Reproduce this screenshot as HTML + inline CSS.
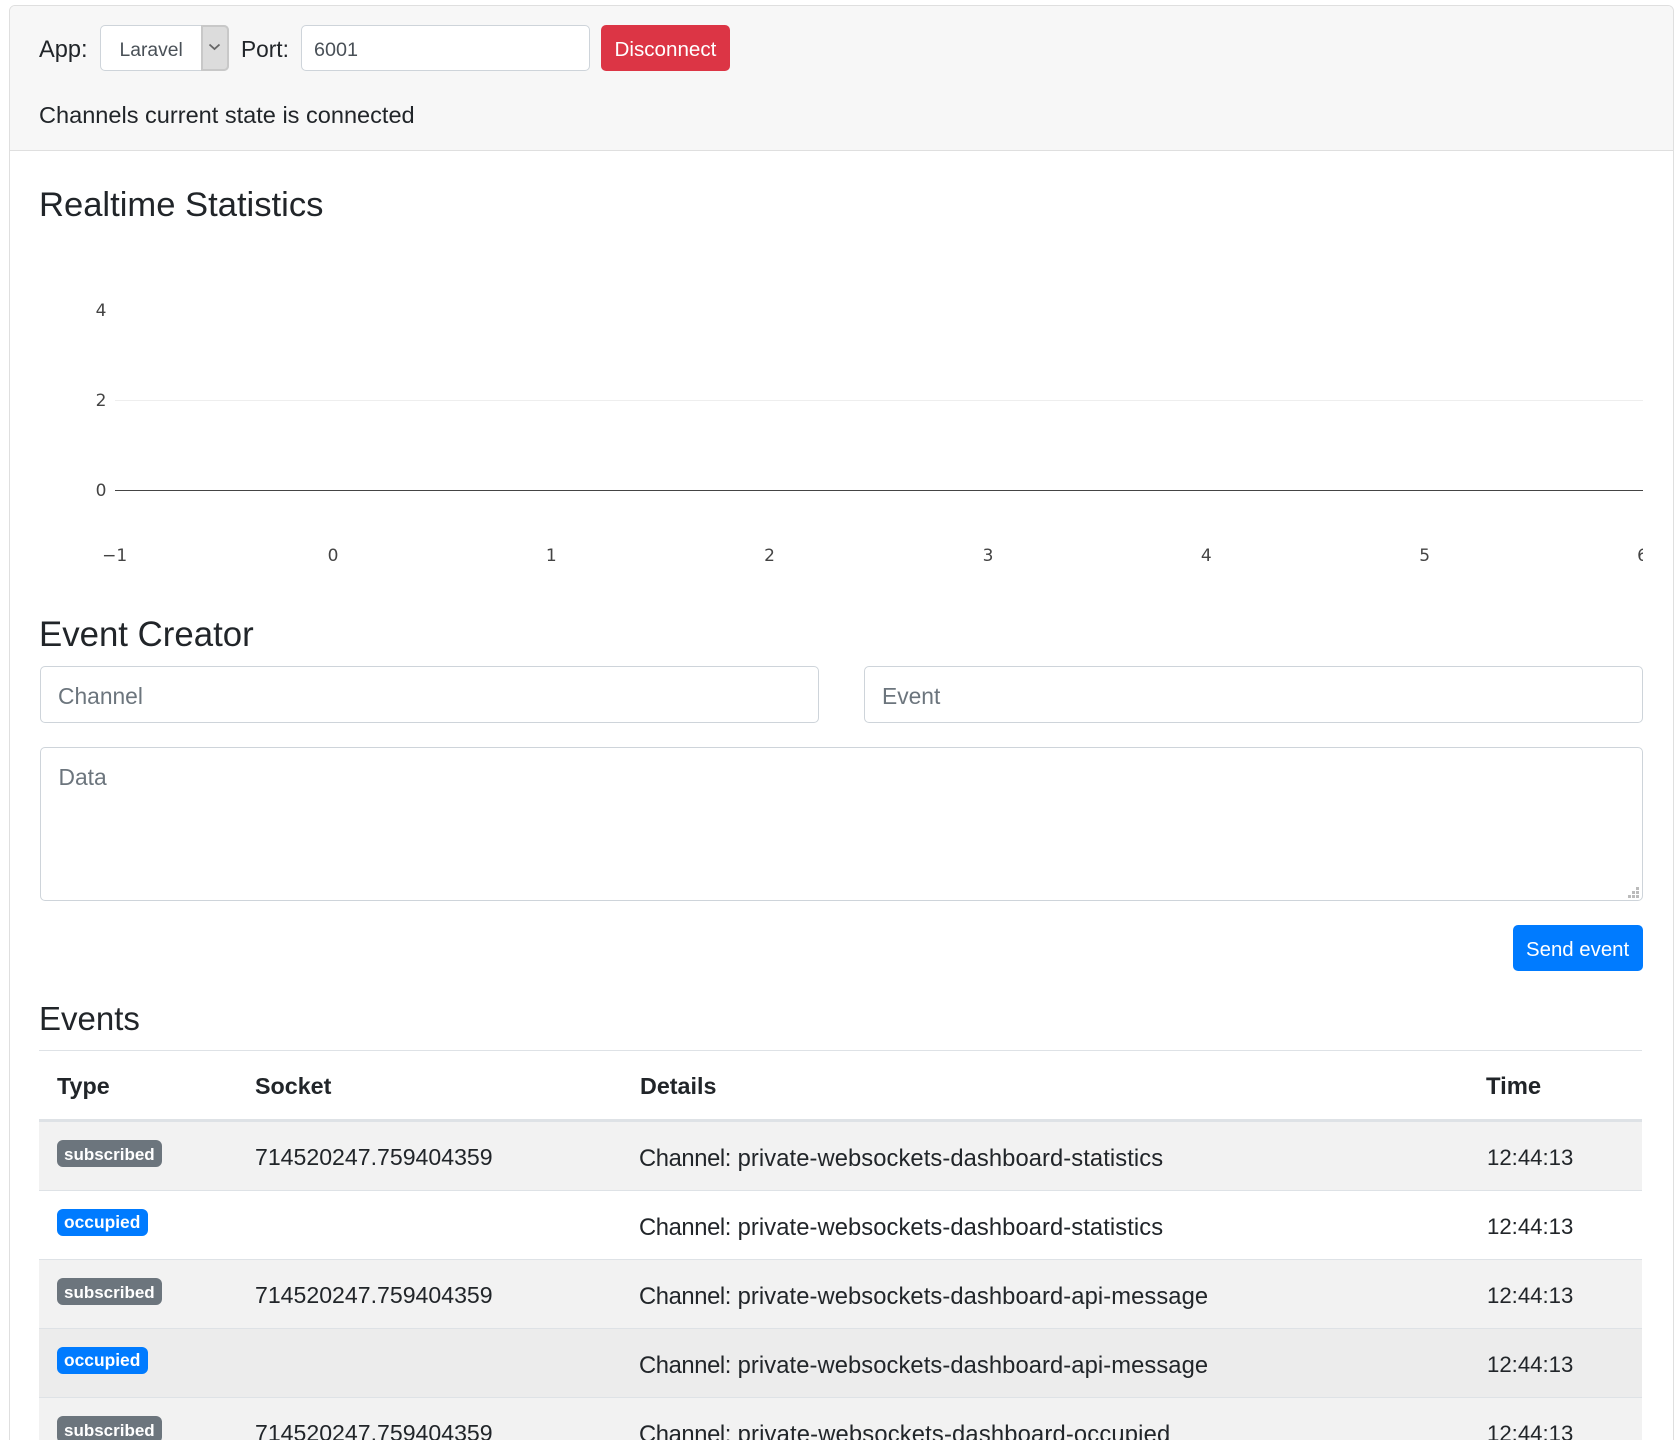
<!DOCTYPE html>
<html lang="en">
<head>
<meta charset="utf-8">
<title>WebSockets Dashboard</title>
<style>
html,body{margin:0;padding:0;background:#fff;width:1675px;height:1440px;overflow:hidden}
body{position:relative;font-family:"Liberation Sans",Arial,sans-serif;color:#212529}
.t{position:absolute;white-space:nowrap;line-height:1;top:calc(var(--b) - .8305em)}
.box{position:absolute;box-sizing:border-box}
.card{left:9px;top:5px;width:1665px;height:1500px;border:1px solid #dfdfdf;border-radius:6px;background:#fff}
.head{left:10px;top:6px;width:1663px;height:145px;background:#f7f7f7;border-bottom:1px solid #dfdfdf;border-radius:5px 5px 0 0}
.inp{background:#fff;border:1px solid #ced4da;border-radius:5px}
.ph{color:#6c757d;font-size:22.8px}
.h{font-size:34.6px;color:#212529}
.m{font-size:23px}
.th{font-size:23.3px;font-weight:bold}
.sock{font-size:23.1px}
.det{font-size:23.75px}
.det b{font-weight:normal;letter-spacing:-.38px}
.det i{font-style:normal;letter-spacing:.08px}
.tm{font-size:22.2px}
.row{left:39px;width:1603px;border-bottom:1px solid #dee2e6}
.badge{position:absolute;left:57px;height:27px;border-radius:6px;color:#fff}
.sub{width:105px;background:#6c757d}
.occ{width:91px;background:#007bff}
.bt{font-weight:bold;color:#fff;font-size:17px}
.chart{position:absolute;left:60px;top:280px;width:1583px;height:300px;overflow:hidden}
.chart .n{position:absolute;font-family:"DejaVu Sans",Verdana,sans-serif;font-size:17px;line-height:1;color:#444;white-space:nowrap;transform:translateX(-50%)}
</style>
</head>
<body>
<div class="box card"></div>
<div class="box head"></div>

<span class="t m" style="--b:58.3px;left:39px;font-size:23.6px">App:</span>
<div class="box inp" style="left:100px;top:25px;width:129px;height:46px"></div>
<span class="t" style="--b:57.5px;left:119.5px;font-size:19.3px;color:#495057">Laravel</span>
<div class="box" style="left:201px;top:25px;width:28px;height:46px;background:#dcdcdc;border:2px solid #c8c8c8;border-radius:0 5px 5px 0">
<svg width="24" height="42" style="position:absolute;left:0;top:0"><path d="M6.5 17.5 L11.5 22 L16.5 17.5" fill="none" stroke="#666" stroke-width="1.8"/></svg>
</div>
<span class="t m" style="--b:57px;left:241px;font-size:22.7px">Port:</span>
<div class="box inp" style="left:301px;top:25px;width:289px;height:46px"></div>
<span class="t" style="--b:57.6px;left:314px;font-size:19.8px;color:#495057">6001</span>
<div class="box" style="left:601px;top:25px;width:129px;height:46px;background:#dc3545;border-radius:5px"></div>
<span class="t" style="--b:57.6px;left:614.5px;font-size:20.6px;color:#fff">Disconnect</span>
<span class="t" style="--b:124px;left:39px;font-size:23.55px">Channels current state is connected</span>

<span class="t h" style="--b:216.7px;left:39px">Realtime Statistics</span>

<div class="chart">
<div style="position:absolute;left:55px;top:120px;width:1528px;height:1px;background:#eee"></div>
<div style="position:absolute;left:55px;top:210px;width:1528px;height:1px;background:#444"></div>
<span class="n" style="left:41px;top:22.5px">4</span>
<span class="n" style="left:41px;top:113px">2</span>
<span class="n" style="left:41px;top:203px">0</span>
<span class="n" style="left:54.7px;top:267.5px">−1</span>
<span class="n" style="left:273px;top:267.5px">0</span>
<span class="n" style="left:491.3px;top:267.5px">1</span>
<span class="n" style="left:709.5px;top:267.5px">2</span>
<span class="n" style="left:928px;top:267.5px">3</span>
<span class="n" style="left:1146.3px;top:267.5px">4</span>
<span class="n" style="left:1364.7px;top:267.5px">5</span>
<span class="n" style="left:1582.5px;top:267.5px">6</span>
</div>

<span class="t h" style="--b:646.9px;left:39px;font-size:34.8px">Event Creator</span>
<div class="box inp" style="left:40px;top:666px;width:779px;height:57px"></div>
<span class="t ph" style="--b:704px;left:58px">Channel</span>
<div class="box inp" style="left:864px;top:666px;width:779px;height:57px"></div>
<span class="t ph" style="--b:704px;left:882px">Event</span>
<div class="box inp" style="left:40px;top:747px;width:1603px;height:154px"></div>
<span class="t ph" style="--b:785px;left:58.5px">Data</span>
<svg class="box" style="left:1626px;top:885px" width="14" height="14"><g fill="#bbb"><rect x="10" y="2" width="3" height="3"/><rect x="6" y="6" width="3" height="3"/><rect x="10" y="6" width="3" height="3"/><rect x="2" y="10" width="3" height="3"/><rect x="6" y="10" width="3" height="3"/><rect x="10" y="10" width="3" height="3"/></g></svg>
<div class="box" style="left:1513px;top:925px;width:130px;height:46px;background:#007bff;border-radius:5px"></div>
<span class="t" style="--b:957.3px;left:1526px;font-size:20.4px;color:#fff">Send event</span>

<span class="t h" style="--b:1029.7px;left:39px;font-size:33px">Events</span>
<div class="box" style="left:39px;top:1050px;width:1603px;height:1px;background:#dee2e6"></div>
<span class="t th" style="--b:1094.3px;left:57px">Type</span>
<span class="t th" style="--b:1094.3px;left:255px">Socket</span>
<span class="t th" style="--b:1094.3px;left:640px">Details</span>
<span class="t th" style="--b:1094.3px;left:1486px;font-size:23.8px">Time</span>
<div class="box" style="left:39px;top:1119px;width:1603px;height:3px;background:#dee2e6"></div>

<div class="box row" style="top:1122px;height:69px;background:#f2f2f2"></div>
<div class="box row" style="top:1191px;height:68.5px;background:#fff"></div>
<div class="box row" style="top:1259.5px;height:69px;background:#f2f2f2"></div>
<div class="box row" style="top:1328.5px;height:69px;background:#ececec"></div>
<div class="box row" style="top:1397.5px;height:69px;background:#f2f2f2"></div>

<div class="badge sub" style="top:1140px"></div>
<span class="t bt" style="--b:1160px;left:64px">subscribed</span>
<div class="badge occ" style="top:1209px"></div>
<span class="t bt" style="--b:1228.5px;left:64px;font-size:17.4px">occupied</span>
<div class="badge sub" style="top:1278px"></div>
<span class="t bt" style="--b:1298px;left:64px">subscribed</span>
<div class="badge occ" style="top:1347px"></div>
<span class="t bt" style="--b:1366.5px;left:64px;font-size:17.4px">occupied</span>
<div class="badge sub" style="top:1416px"></div>
<span class="t bt" style="--b:1436px;left:64px">subscribed</span>

<span class="t sock" style="--b:1165px;left:255px">714520247.759404359</span>
<span class="t det" style="--b:1166.5px;left:639px"><b>Channel:</b> <i>private-websockets-dashboard-statistics</i></span>
<span class="t tm" style="--b:1165.2px;left:1487px">12:44:13</span>

<span class="t det" style="--b:1235.5px;left:639px"><b>Channel:</b> <i>private-websockets-dashboard-statistics</i></span>
<span class="t tm" style="--b:1234.2px;left:1487px">12:44:13</span>

<span class="t sock" style="--b:1303.3px;left:255px">714520247.759404359</span>
<span class="t det" style="--b:1304.8px;left:639px"><b>Channel:</b> <i>private-websockets-dashboard-api-message</i></span>
<span class="t tm" style="--b:1303.5px;left:1487px">12:44:13</span>

<span class="t det" style="--b:1373.8px;left:639px"><b>Channel:</b> <i>private-websockets-dashboard-api-message</i></span>
<span class="t tm" style="--b:1372.5px;left:1487px">12:44:13</span>

<span class="t sock" style="--b:1441.5px;left:255px">714520247.759404359</span>
<span class="t det" style="--b:1442.8px;left:639px"><b>Channel:</b> <i style="letter-spacing:.17px">private-websockets-dashboard-occupied</i></span>
<span class="t tm" style="--b:1441.5px;left:1487px">12:44:13</span>
</body>
</html>
